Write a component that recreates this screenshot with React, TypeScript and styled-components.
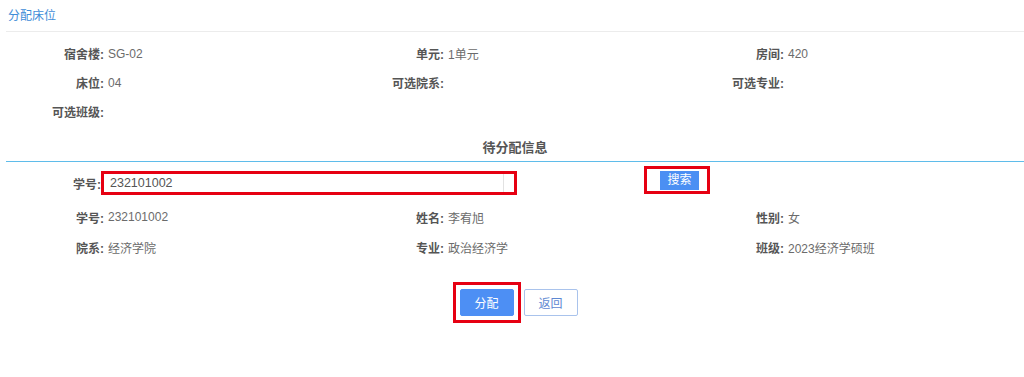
import React from "react";
import styled, { createGlobalStyle } from "styled-components";

const GlobalStyle = createGlobalStyle`
  html, body {
    margin: 0;
    padding: 0;
    background: #ffffff;
  }
  body {
    font-family: "Liberation Sans", "Noto Sans CJK SC", sans-serif;
    font-size: 12px;
    color: #666;
  }
  * { box-sizing: border-box; }
`;

const Page = styled.div`
  width: 1024px;
  height: 377px;
  padding-left: 6px;
  display: flex;
  flex-direction: column;
`;

const TitleBar = styled.div`
  height: 32px;
  line-height: 32px;
  padding-left: 2px;
  border-bottom: 1px solid #ececec;
  color: #3f8dd8;
  font-size: 12px;
`;

const InfoGrid = styled.div<{ $rowH: number; $top: number }>`
  display: grid;
  grid-template-columns: repeat(3, 340px);
  grid-auto-rows: ${(p) => p.$rowH}px;
  margin-top: ${(p) => p.$top}px;
`;

const Field = styled.div`
  display: flex;
  align-items: center;
`;

const Label = styled.span<{ $w?: number }>`
  width: ${(p) => p.$w ?? 98}px;
  flex: none;
  text-align: right;
  font-weight: bold;
  color: #555;
`;

const Value = styled.span`
  margin-left: 4px;
  color: #6b6b6b;
`;

const SectionHeader = styled.div`
  flex: none;
  height: 35px;
  padding-top: 13px;
  line-height: 18px;
  text-align: center;
  font-size: 13px;
  font-weight: bold;
  color: #555;
`;

const BlueRule = styled.div`
  flex: none;
  height: 1px;
  background: #5fbcea;
`;

const SearchRow = styled.div`
  display: flex;
  align-items: flex-start;
  margin-top: 9px;
  height: 24px;
`;

const Highlight = styled.div<{ $pad?: string }>`
  border: 3px solid #e60012;
  padding: ${(p) => p.$pad ?? "0"};
  display: flex;
  align-items: center;
`;

const InputBox = styled.div`
  width: 400px;
  height: 18px;
  border-right: 1px solid #e2e2e2;
  padding-left: 6px;
  display: flex;
  align-items: center;
  font-size: 12.5px;
  color: #555;
`;

const SearchWrap = styled.div`
  margin-left: 127px;
  margin-top: -5px;
`;

const SmallButton = styled.button`
  width: 39px;
  height: 19px;
  padding: 0;
  border: none;
  background: #4b8ff3;
  color: #fff;
  font-family: inherit;
  font-size: 12px;
  line-height: 19px;
`;

const ButtonRow = styled.div`
  display: flex;
  justify-content: center;
  align-items: center;
  gap: 3px;
  margin-top: 20px;
`;

const Button = styled.button<{ $primary?: boolean }>`
  width: 54px;
  height: 27px;
  padding: 0;
  font-family: inherit;
  font-size: 12px;
  border-radius: 2px;
  border: 1px solid ${(p) => (p.$primary ? "#4d8ff4" : "#a9c3ec")};
  background: ${(p) => (p.$primary ? "#4d8ff4" : "#ffffff")};
  color: ${(p) => (p.$primary ? "#ffffff" : "#5e88d2")};
`;

const bedInfo: [string, string][] = [
  ["宿舍楼", "SG-02"],
  ["单元", "1单元"],
  ["房间", "420"],
  ["床位", "04"],
  ["可选院系", ""],
  ["可选专业", ""],
  ["可选班级", ""],
];

const studentInfo: [string, string][] = [
  ["学号", "232101002"],
  ["姓名", "李宥旭"],
  ["性别", "女"],
  ["院系", "经济学院"],
  ["专业", "政治经济学"],
  ["班级", "2023经济学硕班"],
];

export default function App() {
  return (
    <>
      <GlobalStyle />
      <Page>
        <TitleBar>分配床位</TitleBar>
        <InfoGrid $rowH={29} $top={7}>
          {bedInfo.map(([k, v]) => (
            <Field key={k}>
              <Label>{k}:</Label>
              <Value>{v}</Value>
            </Field>
          ))}
        </InfoGrid>
        <SectionHeader>待分配信息</SectionHeader>
        <BlueRule />
        <SearchRow>
          <Field style={{ height: 24 }}>
            <Label $w={95}>学号:</Label>
          </Field>
          <Highlight style={{ width: 416, height: 24 }}>
            <InputBox>232101002</InputBox>
          </Highlight>
          <SearchWrap>
            <Highlight $pad="2px 8px 1px 13px">
              <SmallButton>搜索</SmallButton>
            </Highlight>
          </SearchWrap>
        </SearchRow>
        <InfoGrid $rowH={30} $top={7}>
          {studentInfo.map(([k, v]) => (
            <Field key={k}>
              <Label>{k}:</Label>
              <Value>{v}</Value>
            </Field>
          ))}
        </InfoGrid>
        <ButtonRow>
          <Highlight $pad="4px">
            <Button $primary>分配</Button>
          </Highlight>
          <Button>返回</Button>
        </ButtonRow>
      </Page>
    </>
  );
}
